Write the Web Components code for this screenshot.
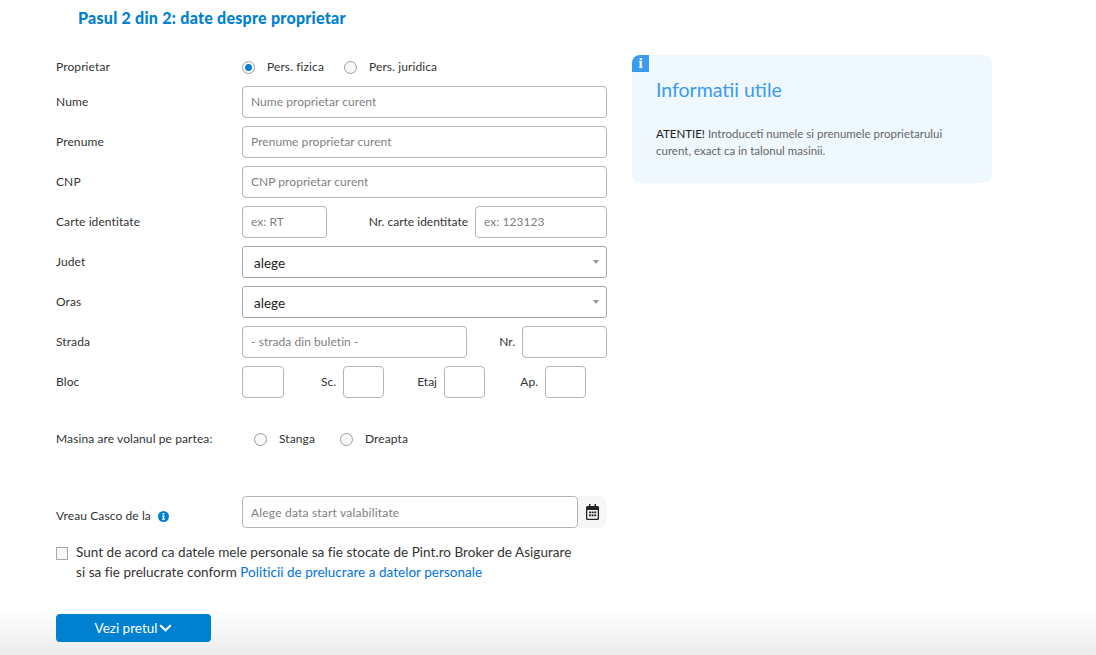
<!DOCTYPE html>
<html lang="ro">
<head>
<meta charset="utf-8">
<title>Pasul 2 din 2</title>
<style>
  html, body { margin: 0; height: 100%; overflow: hidden; background: #fff; }
  body { font-family: Lato, "Open Sans", sans-serif; color: #333; }
  a { color: #0073e0; text-decoration: none; }
</style>
</head>
<body>
<owner-page>
  <span slot="title">Pasul 2 din 2: date despre proprietar</span>

  <form-row label="Proprietar" height="24">
    <radio-option checked gap="20">Pers. fizica</radio-option>
    <radio-option>Pers. juridica</radio-option>
  </form-row>
  <form-row label="Nume"><text-field grow placeholder="Nume proprietar curent"></text-field></form-row>
  <form-row label="Prenume"><text-field grow placeholder="Prenume proprietar curent"></text-field></form-row>
  <form-row label="CNP"><text-field grow placeholder="CNP proprietar curent"></text-field></form-row>
  <form-row label="Carte identitate">
    <text-field width="85" placeholder="ex: RT"></text-field>
    <inline-label width="148">Nr. carte identitate</inline-label>
    <text-field width="132" placeholder="ex: 123123"></text-field>
  </form-row>
  <form-row label="Judet"><select-field>alege</select-field></form-row>
  <form-row label="Oras"><select-field>alege</select-field></form-row>
  <form-row label="Strada">
    <text-field width="225" placeholder="- strada din buletin -"></text-field>
    <inline-label width="55">Nr.</inline-label>
    <text-field width="85"></text-field>
  </form-row>
  <form-row label="Bloc">
    <text-field width="42"></text-field>
    <inline-label width="59">Sc.</inline-label>
    <text-field width="41"></text-field>
    <inline-label width="60">Etaj</inline-label>
    <text-field width="41"></text-field>
    <inline-label width="60">Ap.</inline-label>
    <text-field width="41"></text-field>
  </form-row>

  <form-row label="Masina are volanul pe partea:" height="24" top="29" inset="12">
    <radio-option gap="25">Stanga</radio-option>
    <radio-option>Dreapta</radio-option>
  </form-row>

  <form-row top="45" label-top="8">
    <span slot="label">Vreau Casco de la <info-dot></info-dot></span>
    <text-field width="336" addon placeholder="Alege data start valabilitate"></text-field>
    <date-addon></date-addon>
  </form-row>

  <consent-box>Sunt de acord ca datele mele personale sa fie stocate de Pint.ro Broker de Asigurare<br>si sa fie prelucrate conform <a href="#">Politicii de prelucrare a datelor personale</a></consent-box>

  <primary-button>Vezi pretul</primary-button>

  <info-card slot="aside" heading="Informatii utile">
    <b>ATENTIE!</b> Introduceti numele si prenumele proprietarului<br>curent, exact ca in talonul masinii.
  </info-card>
</owner-page>

<script>
class OwnerPage extends HTMLElement {
  constructor() {
    super();
    this.attachShadow({ mode: 'open' });
    this.shadowRoot.innerHTML = `
      <style>
        :host { display: block; position: relative; height: 655px; box-sizing: border-box; padding-left: 56px; }
        h1 { margin: 0 0 0 22px; height: 36px; line-height: 36px; font-size: 16px; font-weight: 900; color: #0080d0; letter-spacing: .25px; }
        .columns { display: flex; gap: 25px; margin-top: 19px; align-items: flex-start; position: relative; z-index: 1; }
        .form { display: flex; flex-direction: column; gap: 8px; width: 551px; }
        ::slotted(form-row:first-of-type) { margin-bottom: -1px; }
        .shade { position: absolute; left: 0; right: 0; bottom: 0; height: 46px; background: linear-gradient(#fff, #ececec); }
      </style>
      <div class="shade"></div>
      <h1><slot name="title"></slot></h1>
      <div class="columns">
        <div class="form"><slot></slot></div>
        <slot name="aside"></slot>
      </div>
    `;
  }
}

class FormRow extends HTMLElement {
  constructor() {
    super();
    this.attachShadow({ mode: 'open' });
    this.shadowRoot.innerHTML = `
      <style>
        :host { display: grid; grid-template-columns: 186px 1fr; font-size: 12px; color: #333; }
        .label { align-self: center; padding-bottom: 2px; letter-spacing: .1px; }
        .content { display: flex; align-items: center; height: 32px; }
      </style>
      <div class="label"><slot name="label"></slot></div>
      <div class="content"><slot></slot></div>
    `;
  }

  connectedCallback() {
    const label = this.shadowRoot.querySelector('.label');
    const content = this.shadowRoot.querySelector('.content');
    if (this.hasAttribute('label')) label.querySelector('slot').textContent = this.getAttribute('label');
    if (this.hasAttribute('height')) content.style.height = this.getAttribute('height') + 'px';
    if (this.hasAttribute('top')) this.style.marginTop = (this.getAttribute('top') - 8) + 'px';
    if (this.hasAttribute('inset')) content.style.paddingLeft = this.getAttribute('inset') + 'px';
    if (this.hasAttribute('label-top')) label.style.paddingTop = this.getAttribute('label-top') + 'px';
  }
}

class TextField extends HTMLElement {
  constructor() {
    super();
    this.attachShadow({ mode: 'open' });
    this.shadowRoot.innerHTML = `
      <style>
        :host { display: block; box-sizing: border-box; height: 32px; border: 1px solid #b5b5b5; border-radius: 4px; background: #fff; padding: 0 8px; line-height: 30px; font-size: 12px; letter-spacing: .05px; color: #808080; white-space: nowrap; overflow: hidden; }
        :host([grow]) { flex: 1; }
        :host([addon]) { line-height: 32px; letter-spacing: .2px; }
      </style>
      <span class="text"></span>
    `;
  }

  connectedCallback() {
    this.shadowRoot.querySelector('.text').textContent = this.getAttribute('placeholder') || '';
    if (this.hasAttribute('width')) this.style.width = this.getAttribute('width') + 'px';
  }
}

class SelectField extends HTMLElement {
  constructor() {
    super();
    this.attachShadow({ mode: 'open' });
    this.shadowRoot.innerHTML = `
      <style>
        :host { flex: 1; display: flex; align-items: center; justify-content: space-between; box-sizing: border-box; height: 32px; border: 1px solid #a5a5a5; border-radius: 3px; padding: 2px 7px 0 11px; font-size: 13.5px; color: #222; }
        svg { display: block; margin-top: -2px; }
      </style>
      <span><slot></slot></span>
      <svg width="6" height="4" viewBox="0 0 6 4"><path d="M0 0h6L3 4z" fill="#999"/></svg>
    `;
  }
}

class RadioOption extends HTMLElement {
  constructor() {
    super();
    this.attachShadow({ mode: 'open' });
    this.shadowRoot.innerHTML = `
      <style>
        :host { display: inline-flex; align-items: center; gap: 12px; font-size: 12px; letter-spacing: .1px; color: #333; white-space: nowrap; }
        .dot { box-sizing: border-box; width: 13px; height: 13px; border: 1px solid #9c9c9c; border-radius: 50%; background: #f8f8f8; display: flex; align-items: center; justify-content: center; }
        .text { padding-bottom: 2px; }
        :host([checked]) .dot { background: #fff; }
        :host([checked]) .dot::after { content: ""; width: 7px; height: 7px; border-radius: 50%; background: #0080d0; }
      </style>
      <span class="dot"></span><span class="text"><slot></slot></span>
    `;
  }

  connectedCallback() {
    if (this.hasAttribute('gap')) this.style.marginRight = this.getAttribute('gap') + 'px';
  }
}

class InlineLabel extends HTMLElement {
  constructor() {
    super();
    this.attachShadow({ mode: 'open' });
    this.shadowRoot.innerHTML = `
      <style>
        :host { display: block; box-sizing: border-box; padding: 0 7px 2px 0; text-align: right; font-size: 12px; white-space: nowrap; }
      </style>
      <slot></slot>
    `;
  }

  connectedCallback() {
    this.style.width = this.getAttribute('width') + 'px';
  }
}

class InfoDot extends HTMLElement {
  constructor() {
    super();
    this.attachShadow({ mode: 'open' });
    this.shadowRoot.innerHTML = `
      <style>
        :host { display: inline-block; vertical-align: -2px; margin-left: 4px; }
        svg { display: block; }
      </style>
      <svg width="11" height="11" viewBox="0 0 11 11">
        <circle cx="5.5" cy="5.5" r="5.5" fill="#0080d0"/>
        <rect x="4.7" y="2" width="1.6" height="1.6" fill="#fff"/>
        <path d="M4 4.5h2.3v3.2h.8v1H4v-1h.8V5.500H4z" fill="#fff"/>
      </svg>
    `;
  }
}

class DateAddon extends HTMLElement {
  constructor() {
    super();
    this.attachShadow({ mode: 'open' });
    this.shadowRoot.innerHTML = `
      <style>
        :host { display: flex; align-items: center; justify-content: center; width: 29px; height: 32px; background: #f6f6f6; border-radius: 0 8px 8px 0; }
        svg { display: block; }
      </style>
      <svg width="13" height="16" viewBox="0 0 13 16">
        <path fill="#222" fill-rule="evenodd" d="M3 0h1.500v2h4V0H10v2h1.500A1.500 1.500 0 0 1 13 3.500v11a1.500 1.500 0 0 1-1.500 1.500h-10A1.500 1.500 0 0 1 0 14.500v-11A1.500 1.500 0 0 1 1.500 2H3zM1.300 6v8.200c0 .300.200.500.500.500h9.400c.300 0 .500-.200.500-.500V6z"/>
        <path fill="#222" d="M3 7.500h2v1.700H3zM5.600 7.500h2v1.700h-2zM8.200 7.500h2v1.700h-2zM3 10.500h2v1.700H3zM5.600 10.500h2v1.700h-2zM8.200 10.500h2v1.700h-2z"/>
      </svg>
    `;
  }
}

class ConsentBox extends HTMLElement {
  constructor() {
    super();
    this.attachShadow({ mode: 'open' });
    this.shadowRoot.innerHTML = `
      <style>
        :host { display: flex; gap: 8px; margin-top: 6px; font-size: 13.5px; line-height: 20px; letter-spacing: .03px; color: #333; white-space: nowrap; }
        .box { box-sizing: border-box; width: 12px; height: 13px; margin-top: 5px; border: 1px solid #a8a8a8; background: #f8f8f8; }
      </style>
      <span class="box"></span>
      <div><slot></slot></div>
    `;
  }
}

class PrimaryButton extends HTMLElement {
  constructor() {
    super();
    this.attachShadow({ mode: 'open' });
    this.shadowRoot.innerHTML = `
      <style>
        :host { display: flex; align-items: center; justify-content: center; gap: 2px; box-sizing: border-box; width: 155px; height: 28px; margin-top: 24px; border-radius: 4px; background: #0080d0; color: #fff; font-size: 13.5px; }
        svg { display: block; }
      </style>
      <span><slot></slot></span>
      <svg width="13" height="8" viewBox="0 0 13 8"><path d="M1.200 1.200 6.500 6.300l5.300-5.100" fill="none" stroke="#fff" stroke-width="2"/></svg>
    `;
  }
}

class InfoCard extends HTMLElement {
  constructor() {
    super();
    this.attachShadow({ mode: 'open' });
    this.shadowRoot.innerHTML = `
      <style>
        :host { display: block; position: relative; box-sizing: border-box; width: 360px; height: 128px; padding: 23px 24px 0; border-radius: 8px; background: #eff7ff; overflow: hidden; }
        .badge { position: absolute; left: 0; top: 0; width: 17px; height: 17px; background: #3a9bf0; color: #fff; font: 700 15px/17px "Liberation Serif", serif; text-align: center; }
        h2 { margin: 0 0 23px; font-size: 19.5px; line-height: 24px; font-weight: 400; color: #3a9bf0; }
        p { margin: 0; font-size: 11.5px; line-height: 17px; color: #666; }
        ::slotted(b) { font-weight: 400; color: #222; }
      </style>
      <span class="badge">i</span>
      <h2></h2>
      <p><slot></slot></p>
    `;
  }

  connectedCallback() {
    this.shadowRoot.querySelector('h2').textContent = this.getAttribute('heading');
  }
}

customElements.define('owner-page', OwnerPage);
customElements.define('form-row', FormRow);
customElements.define('text-field', TextField);
customElements.define('select-field', SelectField);
customElements.define('radio-option', RadioOption);
customElements.define('inline-label', InlineLabel);
customElements.define('info-dot', InfoDot);
customElements.define('date-addon', DateAddon);
customElements.define('consent-box', ConsentBox);
customElements.define('primary-button', PrimaryButton);
customElements.define('info-card', InfoCard);
</script>
</body>
</html>
